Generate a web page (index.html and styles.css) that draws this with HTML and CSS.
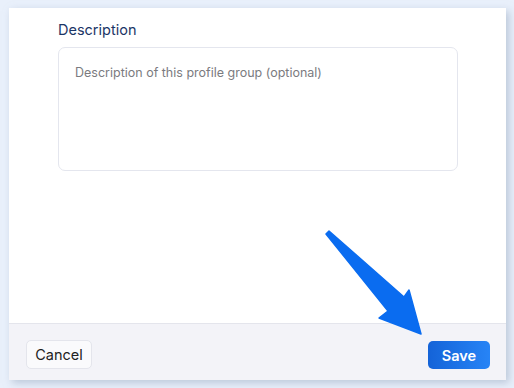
FILE: index.html
```html
<!DOCTYPE html>
<html lang="en">
<head>
    <meta charset="UTF-8">
    <title>Edit profile group</title>
    <link rel="stylesheet" href="styles.css">
</head>
<body>
    <div class="card">
        <div class="card-body">
            <label class="field-label" for="desc">Description</label>
            <textarea id="desc" class="field-input" placeholder="Description of this profile group (optional)"></textarea>
        </div>
        <div class="card-footer">
            <button class="btn btn-cancel">Cancel</button>
            <button class="btn btn-save">Save</button>
        </div>
    </div>

    <!-- Pointer arrow -->
    <svg class="pointer" width="514" height="388" viewBox="0 0 514 388">
        <polygon points="326,234 329,231 404,297 409,290 421,334 379,318 388,311" fill="#0a6cf0" stroke="#0a6cf0" stroke-width="1.5" stroke-linejoin="round"/>
    </svg>
</body>
</html>
```

FILE: styles.css
```css
/* General Styles */
body {
    margin: 0;
    padding: 8px 8px 8px 9px;
    background-color: #e9f0fb;
    font-family: Inter, "Open Sans", sans-serif;
    height: 388px;
    box-sizing: border-box;
    overflow: hidden;
}

/* Card */
.card {
    width: 497px;
    height: 372px;
    background-color: #ffffff;
    box-shadow: 3px 3px 8px rgba(150, 165, 190, 0.55);
    display: flex;
    flex-direction: column;
}

.card-body {
    flex: 1;
    padding: 12px 48px 0 49px;
    display: flex;
    flex-direction: column;
}

.field-label {
    font-size: 14.5px;
    color: #1b3566;
    line-height: 20px;
    margin-bottom: 7px;
}

.field-input {
    width: 400px;
    height: 124px;
    box-sizing: border-box;
    border: 1px solid #e4e6ee;
    border-radius: 7px;
    padding: 17px 16px;
    font-family: inherit;
    font-size: 12.5px;
    resize: none;
    outline: none;
}

.field-input::placeholder {
    color: #7b7b80;
}

/* Footer */
.card-footer {
    height: 57px;
    box-sizing: border-box;
    background-color: #f3f3f8;
    border-top: 1px solid #e4e5ec;
    display: flex;
    justify-content: space-between;
    align-items: flex-start;
    padding: 16px 16px 0 17px;
}

.btn {
    font-family: inherit;
    font-size: 14.5px;
    height: 29px;
    border-radius: 5px;
    cursor: pointer;
}

.btn-cancel {
    width: 66px;
    background-color: #fafafc;
    border: 1px solid #e4e5ec;
    color: #222222;
}

.btn-save {
    width: 62px;
    margin-top: 1px;
    height: 28px;
    border: none;
    color: #ffffff;
    font-weight: 600;
    background: linear-gradient(90deg, #1463d8, #2784f6);
}

/* Arrow overlay */
.pointer {
    position: absolute;
    left: 0;
    top: 0;
    pointer-events: none;
}
```
